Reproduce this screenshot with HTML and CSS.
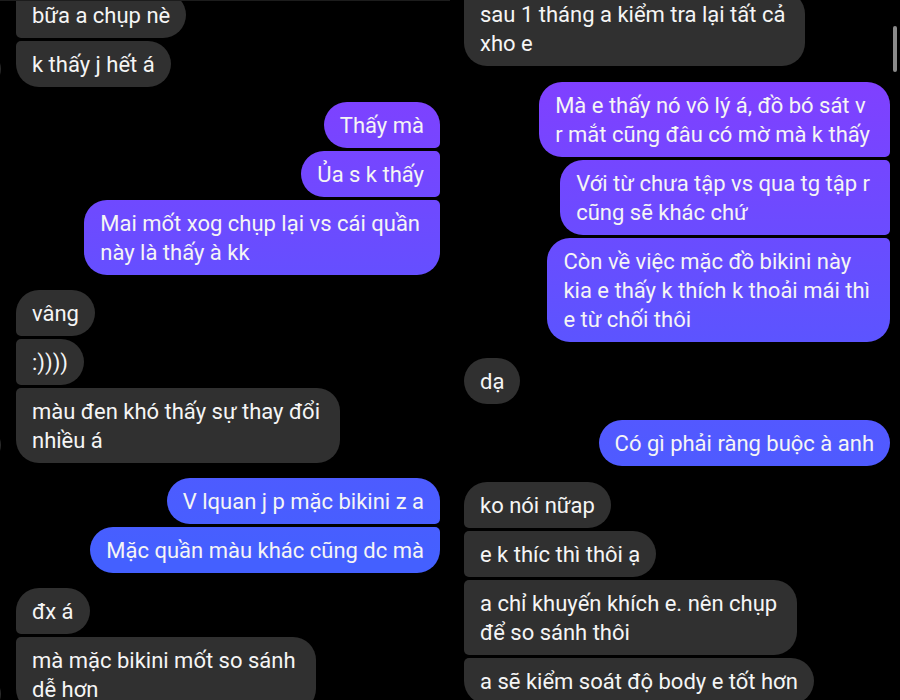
FILE: index.html
```html
<!DOCTYPE html>
<html lang="vi">
<head>
    <meta charset="UTF-8">
    <meta name="viewport" content="width=device-width, initial-scale=1">
    <title>Tin nhắn</title>
    <link rel="stylesheet" href="styles.css">
</head>
<body>
<main class="screens">

    <section class="screen screen-first">
        <div class="group received continued">
            <p class="bubble">bữa a chụp nè</p>
            <p class="bubble avatar">k thấy j hết á</p>
        </div>
        <div class="group sent">
            <p class="bubble">Thấy mà</p>
            <p class="bubble">Ủa s k thấy</p>
            <p class="bubble multi">Mai mốt xog chụp lại vs cái quần<br>này là thấy à kk</p>
        </div>
        <div class="group received">
            <p class="bubble">vâng</p>
            <p class="bubble">:))))</p>
            <p class="bubble multi avatar">màu đen khó thấy sự thay đổi<br>nhiều á</p>
        </div>
        <div class="group sent">
            <p class="bubble">V lquan j p mặc bikini z a</p>
            <p class="bubble">Mặc quần màu khác cũng dc mà</p>
        </div>
        <div class="group received">
            <p class="bubble">đx á</p>
            <p class="bubble multi avatar">mà mặc bikini mốt so sánh<br>dễ hơn</p>
        </div>
    </section>

    <section class="screen screen-second">
        <div class="group received continued">
            <p class="bubble multi">sau 1 tháng a kiểm tra lại tất cả<br>xho e</p>
        </div>
        <div class="group sent">
            <p class="bubble multi">Mà e thấy nó vô lý á, đồ bó sát v<br>r mắt cũng đâu có mờ mà k thấy</p>
            <p class="bubble multi">Với từ chưa tập vs qua tg tập r<br>cũng sẽ khác chứ</p>
            <p class="bubble multi">Còn về việc mặc đồ bikini này<br>kia e thấy k thích k thoải mái thì<br>e từ chối thôi</p>
        </div>
        <div class="group received">
            <p class="bubble">dạ</p>
        </div>
        <div class="group sent">
            <p class="bubble">Có gì phải ràng buộc à anh</p>
        </div>
        <div class="group received">
            <p class="bubble">ko nói nữap</p>
            <p class="bubble">e k thíc thì thôi ạ</p>
            <p class="bubble multi">a chỉ khuyến khích e. nên chụp<br>để so sánh thôi</p>
            <p class="bubble">a sẽ kiểm soát độ body e tốt hơn</p>
        </div>
        <div class="scroll-thumb"></div>
    </section>

</main>
</body>
</html>
```
FILE: styles.css
```css
* {
    box-sizing: border-box;
}

body {
    margin: 0;
    background: #000;
    color: #f5f5f5;
    font-family: Roboto, Inter, sans-serif;
    font-size: 22px;
    line-height: 29px;
}

.screens {
    display: grid;
    grid-template-columns: 1fr 1fr;
    height: 100vh;
    overflow: hidden;
}

.screen {
    position: relative;
    display: flex;
    flex-direction: column;
    min-width: 0;
}

/* both threads are scrolled, so the first message is cut off at the top */
.screen-first {
    gap: 15px;
    margin-top: -8px;
    padding: 0 10px 0 16px;
}

.screen-second {
    gap: 16px;
    margin-top: -9px;
    padding: 0 10px 0 14px;
}

/* bottom edge of the chat header */
.screen-first::after {
    content: "";
    position: absolute;
    top: 8px;
    left: 0;
    right: 0;
    height: 1px;
    background: #1c1c1c;
}

.group {
    display: flex;
    flex-direction: column;
    gap: 3px;
}

.received {
    align-items: flex-start;
}

.sent {
    align-items: flex-end;
}

.bubble {
    position: relative;
    margin: 0;
    padding: 9px 16px 8px;
    border-radius: 23px;
    white-space: nowrap;
}

.multi {
    padding-right: 20px;
}

.received .bubble {
    background: #303030;
}

.sent .bubble {
    background: linear-gradient(#8040ff 80px, #5c54ff 340px, #4460ff 560px) fixed;
}

.received .bubble:not(:first-child),
.continued .bubble:first-child {
    border-top-left-radius: 5px;
}

.received .bubble:not(:last-child) {
    border-bottom-left-radius: 5px;
}

.sent .bubble:not(:first-child) {
    border-top-right-radius: 5px;
}

.sent .bubble:not(:last-child) {
    border-bottom-right-radius: 5px;
}

.avatar::before {
    content: "";
    position: absolute;
    left: -51px;
    bottom: 0;
    width: 36px;
    height: 36px;
    border-radius: 50%;
    background: #2a2a2a;
}

.scroll-thumb {
    position: absolute;
    top: 35px;
    right: 3px;
    width: 4px;
    height: 46px;
    border-radius: 2px;
    background: #8a8a8a;
}
```
